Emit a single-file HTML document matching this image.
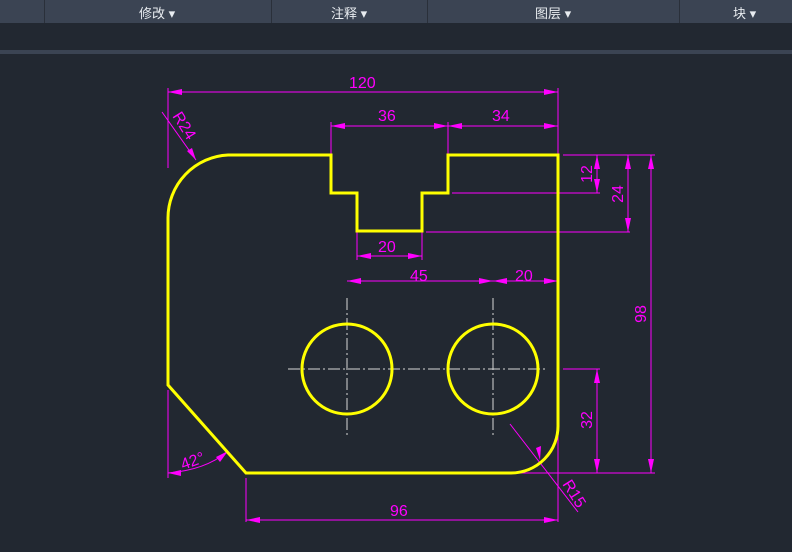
<!DOCTYPE html>
<html><head><meta charset="utf-8"><style>
html,body{margin:0;padding:0;background:#222831;width:792px;height:552px;overflow:hidden}
.bar{position:absolute;left:0;top:0;width:792px;height:23px;background:#3b4453}
.sep{position:absolute;top:0;width:1px;height:23px;background:#2a303a}
.lb{position:absolute;top:3px;color:#e8ecf0;font:13px "Liberation Sans","Noto Sans CJK SC",sans-serif}
.band{position:absolute;left:0;top:50px;width:792px;height:4px;background:#3b4453}
svg{position:absolute;left:0;top:0}
</style></head><body>
<div class="bar"></div>
<div class="sep" style="left:44px"></div><div class="sep" style="left:271px"></div><div class="sep" style="left:427px"></div><div class="sep" style="left:679px"></div>
<div class="lb" style="left:139px">修改 ▾</div>
<div class="lb" style="left:331px">注释 ▾</div>
<div class="lb" style="left:535px">图层 ▾</div>
<div class="lb" style="left:733px">块 ▾</div>
<div class="band"></div>
<svg width="792" height="552" viewBox="0 0 792 552">
<g stroke="#ff00ff" stroke-width="1" fill="none">
<line x1="168" y1="88" x2="168" y2="168"/><line x1="558" y1="88" x2="558" y2="155"/><line x1="168" y1="92" x2="558" y2="92"/>
<line x1="331" y1="122" x2="331" y2="155"/><line x1="448" y1="122" x2="448" y2="155"/><line x1="331" y1="126" x2="558" y2="126"/>
<line x1="357" y1="231" x2="357" y2="260"/><line x1="422" y1="231" x2="422" y2="260"/><line x1="357" y1="256" x2="422" y2="256"/>
<line x1="347" y1="281" x2="558" y2="281"/><line x1="558" y1="281" x2="558" y2="296"/>
<line x1="563" y1="155" x2="655" y2="155"/><line x1="452" y1="193" x2="600" y2="193"/><line x1="426" y1="232" x2="630" y2="232"/>
<line x1="597" y1="155" x2="597" y2="193"/><line x1="628" y1="155" x2="628" y2="232"/><line x1="651" y1="155" x2="651" y2="473"/>
<line x1="563" y1="369" x2="600" y2="369"/><line x1="597" y1="369" x2="597" y2="473"/><line x1="515" y1="473" x2="655" y2="473"/>
<line x1="246" y1="478" x2="246" y2="522"/><line x1="558" y1="430" x2="558" y2="522"/><line x1="246" y1="520" x2="558" y2="520"/>
<line x1="168" y1="390" x2="168" y2="478"/><path d="M168 473 Q205 470 227 452"/>
<line x1="162" y1="112" x2="196" y2="160"/><line x1="510" y1="424" x2="578" y2="512"/>
</g>
<g fill="#ff00ff">
<path d="M168 92l14-3v6z"/><path d="M558 92l-14-3v6z"/><path d="M331 126l14-3v6z"/><path d="M448 126l-14-3v6z"/><path d="M448 126l14-3v6z"/><path d="M558 126l-14-3v6z"/>
<path d="M357 256l14-3v6z"/><path d="M422 256l-14-3v6z"/><path d="M347 281l14-3v6z"/><path d="M493 281l-14-3v6z"/><path d="M493 281l14-3v6z"/><path d="M558 281l-14-3v6z"/>
<path d="M597 155l-3 14h6z"/><path d="M597 193l-3-14h6z"/><path d="M628 155l-3 14h6z"/><path d="M628 232l-3-14h6z"/><path d="M651 155l-3 14h6z"/><path d="M651 473l-3-14h6z"/>
<path d="M597 369l-3 14h6z"/><path d="M597 473l-3-14h6z"/><path d="M246 520l14-3v6z"/><path d="M558 520l-14-3v6z"/>
<path d="M168 473l13-3v6z"/><path d="M228 451l-8 11-4-5z"/><path d="M196 160l-9-9 5-3z"/><path d="M540 460l-4-12 5-2z"/>
</g>
<g fill="#ff00ff" font-family="Liberation Sans,sans-serif" font-size="16">
<text x="349" y="88">120</text><text x="378" y="121">36</text><text x="492" y="121">34</text><text x="378" y="252">20</text>
<text x="410" y="281">45</text><text x="515" y="281">20</text><text x="390" y="516">96</text>
<text transform="translate(592,174) rotate(-90)" text-anchor="middle">12</text>
<text transform="translate(623,194) rotate(-90)" text-anchor="middle">24</text>
<text transform="translate(646,314) rotate(-90)" text-anchor="middle">98</text>
<text transform="translate(592,420) rotate(-90)" text-anchor="middle">32</text>
<text transform="translate(172,116) rotate(58)">R24</text>
<text transform="translate(562,484) rotate(58)">R15</text>
<text transform="translate(183,470) rotate(-20)">42°</text>
</g>
<g stroke="#d8d8d8" stroke-width="1" stroke-dasharray="12,3,2,3">
<line x1="288" y1="369" x2="545" y2="369"/><line x1="347" y1="298" x2="347" y2="438"/><line x1="493" y1="298" x2="493" y2="438"/>
</g>
<g stroke="#ffff00" stroke-width="3" fill="none">
<path d="M228 155H331V193H357V231H422V193H448V155H558V425A47 47 0 0 1 511 473H246L168 385V218A63 63 0 0 1 228 155Z"/>
<circle cx="347" cy="369" r="45"/><circle cx="493" cy="369" r="45"/>
</g>
</svg>
</body></html>
